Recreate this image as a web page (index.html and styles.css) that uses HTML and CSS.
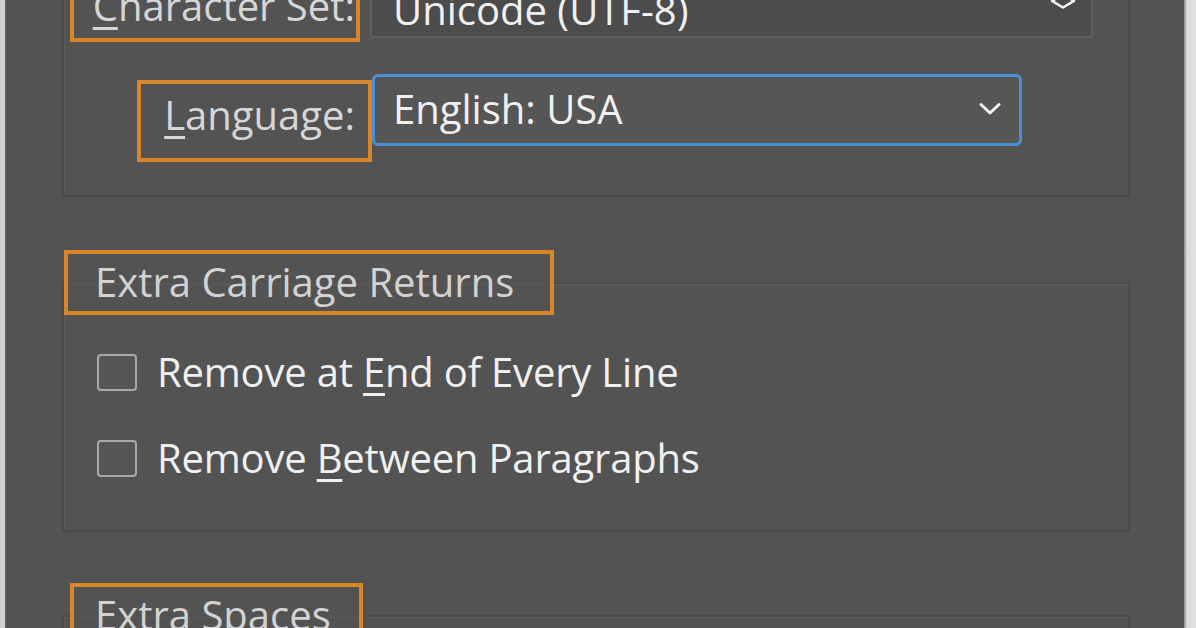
FILE: index.html
```html
<!DOCTYPE html>
<html lang="en">
<head>
<meta charset="utf-8">
<title>Text Import Options</title>
<link rel="stylesheet" href="styles.css">
</head>
<body>
<div class="screen">
  <div class="edge edge-left"></div>
  <main class="panel">
    <section class="group group-enc">
      <div class="row row-charset">
        <div class="label-col">
          <span class="hl hl-charset"><span class="label"><u>C</u>haracter Set:</span></span>
        </div>
        <div class="select select-charset">
          <span class="value">Unicode (UTF-8)</span>
          <svg class="updown" width="26" height="16" viewBox="0 0 26 16"><path d="M13 1.5 L24 8 L13 14.5 L2 8 Z" fill="none" stroke="#f2f2f2" stroke-width="2.6" stroke-linejoin="round"/></svg>
        </div>
      </div>
      <div class="row row-lang">
        <div class="label-col">
          <span class="hl hl-lang"><span class="label"><u>L</u>anguage:</span></span>
        </div>
        <div class="select select-lang">
          <span class="value">English: USA</span>
          <svg class="chev" width="22" height="14" viewBox="0 0 22 14"><polyline points="2,2.5 11,11 20,2.5" fill="none" stroke="#f2f2f2" stroke-width="3" stroke-linecap="round" stroke-linejoin="round"/></svg>
        </div>
      </div>
    </section>

    <fieldset class="group group-cr">
      <legend class="hl legend legend-cr">Extra Carriage Returns</legend>
      <div class="checks">
        <label class="check"><span class="box"></span><span class="ctext">Remove at <u>E</u>nd of Every Line</span></label>
        <label class="check"><span class="box"></span><span class="ctext">Remove <u>B</u>etween Paragraphs</span></label>
      </div>
    </fieldset>

    <fieldset class="group group-sp">
      <legend class="hl legend legend-sp">Extra Spaces</legend>
      <div class="checks"></div>
    </fieldset>
  </main>
  <div class="edge edge-right"></div>
</div>
</body>
</html>
```

FILE: styles.css
```css
html, body {
  margin: 0;
  padding: 0;
  background: #d8d8d8;
}

body {
  font-family: "Open Sans", "Noto Sans", sans-serif;
  font-size: 40px;
  color: #ededed;
}

.screen {
  display: flex;
  width: 1196px;
  height: 628px;
  overflow: hidden;
}

.edge-left {
  width: 6px;
  background: #cfcfcf;
  border-right: 1px solid #6a6a6a;
  box-sizing: border-box;
  flex: none;
}

.edge-right {
  width: 12px;
  background: linear-gradient(to right, #8a8a8a 0, #dcdcdc 3px, #e2e2e2 100%);
  flex: none;
}

.panel {
  flex: 1;
  background: #535353;
  padding: 0 54px 0 56px;
  display: flex;
  flex-direction: column;
  min-width: 0;
}

u {
  text-decoration: underline;
  text-decoration-thickness: 3px;
  text-underline-offset: 6px;
}

.hl {
  border: 4px solid #d9862a;
  box-sizing: border-box;
}

.label {
  color: #d6d6d6;
  white-space: nowrap;
}

/* ---------- group 1: encoding ---------- */
.group-enc {
  margin-top: -62px;
  border: 2px solid #4b4b4b;
  box-shadow: inset 1px 1px 0 #5b5b5b;
  padding: 20px 0 33px 0;
  display: flex;
  flex-direction: column;
  gap: 32px;
}

.row {
  display: flex;
  align-items: flex-start;
}

.label-col {
  width: 306px;
  flex: none;
  display: flex;
  justify-content: flex-end;
}

.hl-charset {
  height: 82px;
  margin-right: 10px;
  padding: 8px 1px 0 19px;
  display: flex;
  align-items: center;
}

.hl-lang {
  height: 82px;
  margin-top: 6px;
  margin-right: -2px;
  padding: 0 13px 14px 23px;
  display: flex;
  align-items: center;
}

.select {
  display: flex;
  align-items: center;
  justify-content: space-between;
  box-sizing: border-box;
  height: 72px;
}

.value {
  color: #f0f0f0;
  white-space: nowrap;
}

.select-charset {
  width: 723px;
  margin-top: 6px;
  background: #4c4c4c;
  border: 2px solid #5e5e5e;
  border-radius: 3px;
  padding: 14px 15px 0 21px;
}

.select-charset .updown {
  margin-top: -16px;
}

.select-lang {
  width: 650px;
  margin-left: 2px;
  background: #565656;
  border: 3px solid #4b8fd6;
  border-radius: 6px;
  padding: 0 18px 4px 18px;
}

.select-lang .chev {
  margin-top: 2px;
}

/* ---------- fieldset groups ---------- */
fieldset.group {
  margin: 0;
  padding: 0;
  min-width: 0;
  border: 2px solid #4b4b4b;
  box-shadow: inset 1px 1px 0 #5b5b5b;
}

.legend {
  color: #d2d2d2;
  height: 65px;
  line-height: 55px;
  white-space: nowrap;
  margin-left: 0;
}

.legend-cr {
  padding: 0 36px 0 27px;
}

fieldset.group-cr {
  margin-top: 53px;
}

.group-cr .checks {
  padding: 32px 0 47px 33px;
  display: flex;
  flex-direction: column;
  gap: 36px;
}

.check {
  display: flex;
  align-items: center;
  height: 50px;
  gap: 20px;
  color: #f0f0f0;
}

.box {
  width: 40px;
  height: 37px;
  box-sizing: border-box;
  border: 2px solid #a9a9a9;
  border-radius: 4px;
  background: #555;
  flex: none;
}

.ctext {
  white-space: nowrap;
  padding-bottom: 2px;
  letter-spacing: -0.2px;
}

fieldset.group-sp {
  margin-top: 51px;
  height: 200px;
  flex: none;
}

.legend-sp {
  margin-left: 6px;
  padding: 0 28px 0 21px;
}
```
